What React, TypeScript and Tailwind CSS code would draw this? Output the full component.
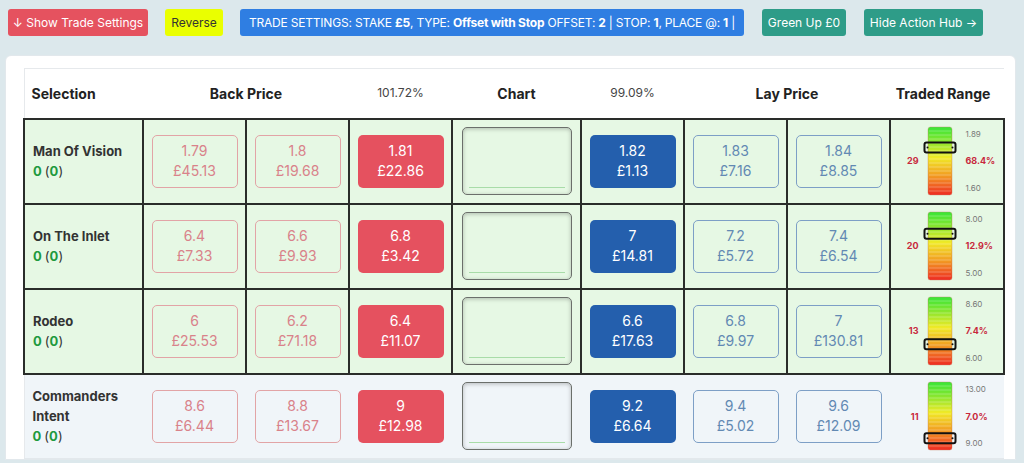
import React from 'react'

type Level = { price: string; stake: string }

interface Runner {
  name: string
  back: Level[]
  lay: Level[]
  range: { count: number; pct: string; hi: string; lo: string; pos: number }
  active: boolean
}

const runners: Runner[] = [
  {
    name: 'Man Of Vision',
    back: [
      { price: '1.79', stake: '£45.13' },
      { price: '1.8', stake: '£19.68' },
      { price: '1.81', stake: '£22.86' },
    ],
    lay: [
      { price: '1.82', stake: '£1.13' },
      { price: '1.83', stake: '£7.16' },
      { price: '1.84', stake: '£8.85' },
    ],
    range: { count: 29, pct: '68.4%', hi: '1.89', lo: '1.60', pos: 0.32 },
    active: true,
  },
  {
    name: 'On The Inlet',
    back: [
      { price: '6.4', stake: '£7.33' },
      { price: '6.6', stake: '£9.93' },
      { price: '6.8', stake: '£3.42' },
    ],
    lay: [
      { price: '7', stake: '£14.81' },
      { price: '7.2', stake: '£5.72' },
      { price: '7.4', stake: '£6.54' },
    ],
    range: { count: 20, pct: '12.9%', hi: '8.00', lo: '5.00', pos: 0.34 },
    active: true,
  },
  {
    name: 'Rodeo',
    back: [
      { price: '6', stake: '£25.53' },
      { price: '6.2', stake: '£71.18' },
      { price: '6.4', stake: '£11.07' },
    ],
    lay: [
      { price: '6.6', stake: '£17.63' },
      { price: '6.8', stake: '£9.97' },
      { price: '7', stake: '£130.81' },
    ],
    range: { count: 13, pct: '7.4%', hi: '8.60', lo: '6.00', pos: 0.74 },
    active: true,
  },
  {
    name: 'Commanders Intent',
    back: [
      { price: '8.6', stake: '£6.44' },
      { price: '8.8', stake: '£13.67' },
      { price: '9', stake: '£12.98' },
    ],
    lay: [
      { price: '9.2', stake: '£6.64' },
      { price: '9.4', stake: '£5.02' },
      { price: '9.6', stake: '£12.09' },
    ],
    range: { count: 11, pct: '7.0%', hi: '13.00', lo: '9.00', pos: 0.88 },
    active: false,
  },
]

function PriceBox({ level, kind }: { level: Level; kind: 'back' | 'lay' | 'bestBack' | 'bestLay' }) {
  const styles = {
    back: 'border border-[#e2a4a6] text-[#d9828a]',
    lay: 'border border-[#7d9fc6] text-[#6289b3]',
    bestBack: 'bg-[#e5515f] text-white',
    bestLay: 'bg-[#245fad] text-white',
  }
  return (
    <div className={`mx-auto flex h-[53px] w-[86px] flex-col items-center justify-center rounded-[5px] text-[14px] leading-[20px] ${styles[kind]}`}>
      <span>{level.price}</span>
      <span>{level.stake}</span>
    </div>
  )
}

function RangeBar({ pos }: { pos: number }) {
  const stripes = Array.from({ length: 16 }, (_, i) => 4 + i * 4)
  const markerY = 2 + pos * 64 - 5
  return (
    <svg width="34" height="72" viewBox="0 0 34 72">
      <defs>
        <linearGradient id="rg" x1="0" y1="0" x2="0" y2="1">
          <stop offset="0" stopColor="#36e636" />
          <stop offset="0.22" stopColor="#8ce62e" />
          <stop offset="0.45" stopColor="#f0ea26" />
          <stop offset="0.72" stopColor="#f29a22" />
          <stop offset="1" stopColor="#ee2a22" />
        </linearGradient>
      </defs>
      <rect x="5" y="2" width="24" height="68" rx="2.5" fill="url(#rg)" stroke="#c98a6a" strokeOpacity="0.4" />
      {stripes.map((y) => (
        <line key={y} x1="6" x2="28" y1={y + 2} y2={y + 2} stroke="#ffffff" strokeOpacity="0.35" strokeWidth="0.8" />
      ))}
      <rect x="1.5" y={markerY} width="31" height="10" rx="2" fill="none" stroke="#111" strokeWidth="2" />
      <circle cx="4.5" cy={markerY + 5} r="1" fill="#111" />
      <circle cx="29.5" cy={markerY + 5} r="1" fill="#111" />
    </svg>
  )
}

function ChartBox() {
  return (
    <div className="mx-auto flex h-[68px] w-[110px] flex-col justify-end rounded-[5px] border-[1.5px] border-[#6b6f6b] px-[6px] pb-[6px] shadow-[inset_0_1px_4px_rgba(0,0,0,0.25)]">
      <div className="h-px bg-[#a8dca8]" />
    </div>
  )
}

export default function App() {
  const topBtn = 'flex h-[27px] shrink-0 items-center rounded-[3px] px-[8px] text-[12px] whitespace-nowrap'

  return (
    <div className="min-h-[463px] bg-[#dce8ec] font-['Inter',sans-serif] text-[#222]">
      {/* Action bar */}
      <div className="flex items-center gap-[17px] px-2 pt-[9px]">
        <button className={`${topBtn} w-[140px] justify-center bg-[#e5525f] text-white`}>↓ Show Trade Settings</button>
        <button className={`${topBtn} w-[58px] justify-center bg-[#eaff00] text-[#333]`}>Reverse</button>
        <button className={`${topBtn} w-[504px] justify-center bg-[#2f7ee2] tracking-[-0.2px] text-white`}>
          TRADE SETTINGS: STAKE&nbsp;<b>£5</b>, TYPE:&nbsp;<b>Offset with Stop</b>&nbsp;OFFSET:&nbsp;<b>2</b>&nbsp;| STOP:&nbsp;<b>1</b>, PLACE @:&nbsp;<b>1</b>&nbsp;|
        </button>
        <button className={`${topBtn} ml-px w-[84px] justify-center bg-[#2e9c88] text-white`}>Green Up £0</button>
        <button className={`${topBtn} ml-px w-[119px] justify-center bg-[#2e9c88] text-white`}>Hide Action Hub →</button>
      </div>

      {/* Market panel */}
      <div className="ml-[5px] mt-[19px] w-[1011px] rounded-t-[6px] border border-[#e2e8ec] bg-white pl-[17px] pt-[12px]">
        <table className="w-[980px] table-fixed border-collapse border-l border-t border-[#e6e9ec]">
          <colgroup>
            <col className="w-[119px]" />
            <col className="w-[103px]" />
            <col className="w-[103px]" />
            <col className="w-[103px]" />
            <col className="w-[129px]" />
            <col className="w-[103px]" />
            <col className="w-[103px]" />
            <col className="w-[103px]" />
            <col className="w-[114px]" />
          </colgroup>
          <thead>
            <tr className="h-[50px] text-[14px]">
              <th className="pl-[7px] text-left font-bold">Selection</th>
              <th colSpan={2} className="font-bold">Back Price</th>
              <th className="text-[12px] font-normal text-[#444]">101.72%</th>
              <th className="font-bold">Chart</th>
              <th className="text-[12px] font-normal text-[#444]">99.09%</th>
              <th colSpan={2} className="font-bold">Lay Price</th>
              <th className="pr-[8px] font-bold">Traded Range</th>
            </tr>
          </thead>
          <tbody>
            {runners.map((r) => {
              const cell = r.active
                ? 'border-2 border-[#2a2d2a] bg-[#e6f8e4]'
                : 'border-b border-[#e3e8ec] bg-[#f0f5f9]'
              return (
                <tr key={r.name} className="h-[85px]">
                  <td className={`${cell} pl-[8px] text-[13px] leading-[20px]`}>
                    <div className="w-[90px] font-bold text-[#333]">{r.name}</div>
                    <div className="font-bold text-[#1f9a3e]">
                      0 <span className="font-normal text-[#333]">(</span>0<span className="font-normal text-[#333]">)</span>
                    </div>
                  </td>
                  <td className={cell}><PriceBox level={r.back[0]} kind="back" /></td>
                  <td className={cell}><PriceBox level={r.back[1]} kind="back" /></td>
                  <td className={cell}><PriceBox level={r.back[2]} kind="bestBack" /></td>
                  <td className={cell}><ChartBox /></td>
                  <td className={cell}><PriceBox level={r.lay[0]} kind="bestLay" /></td>
                  <td className={cell}><PriceBox level={r.lay[1]} kind="lay" /></td>
                  <td className={cell}><PriceBox level={r.lay[2]} kind="lay" /></td>
                  <td className={cell}>
                    <div className="flex items-center justify-center pr-[4px]">
                      <span className="w-[24px] text-right text-[9px] font-bold text-[#c8283c]">{r.range.count}</span>
                      <div className="ml-[4px]"><RangeBar pos={r.range.pos} /></div>
                      <div className="ml-[9px] flex h-[66px] w-[30px] flex-col justify-between text-[8px] text-[#777]">
                        <span>{r.range.hi}</span>
                        <span className="text-[9px] font-bold text-[#c8283c]">{r.range.pct}</span>
                        <span>{r.range.lo}</span>
                      </div>
                    </div>
                  </td>
                </tr>
              )
            })}
          </tbody>
        </table>
      </div>
    </div>
  )
}
